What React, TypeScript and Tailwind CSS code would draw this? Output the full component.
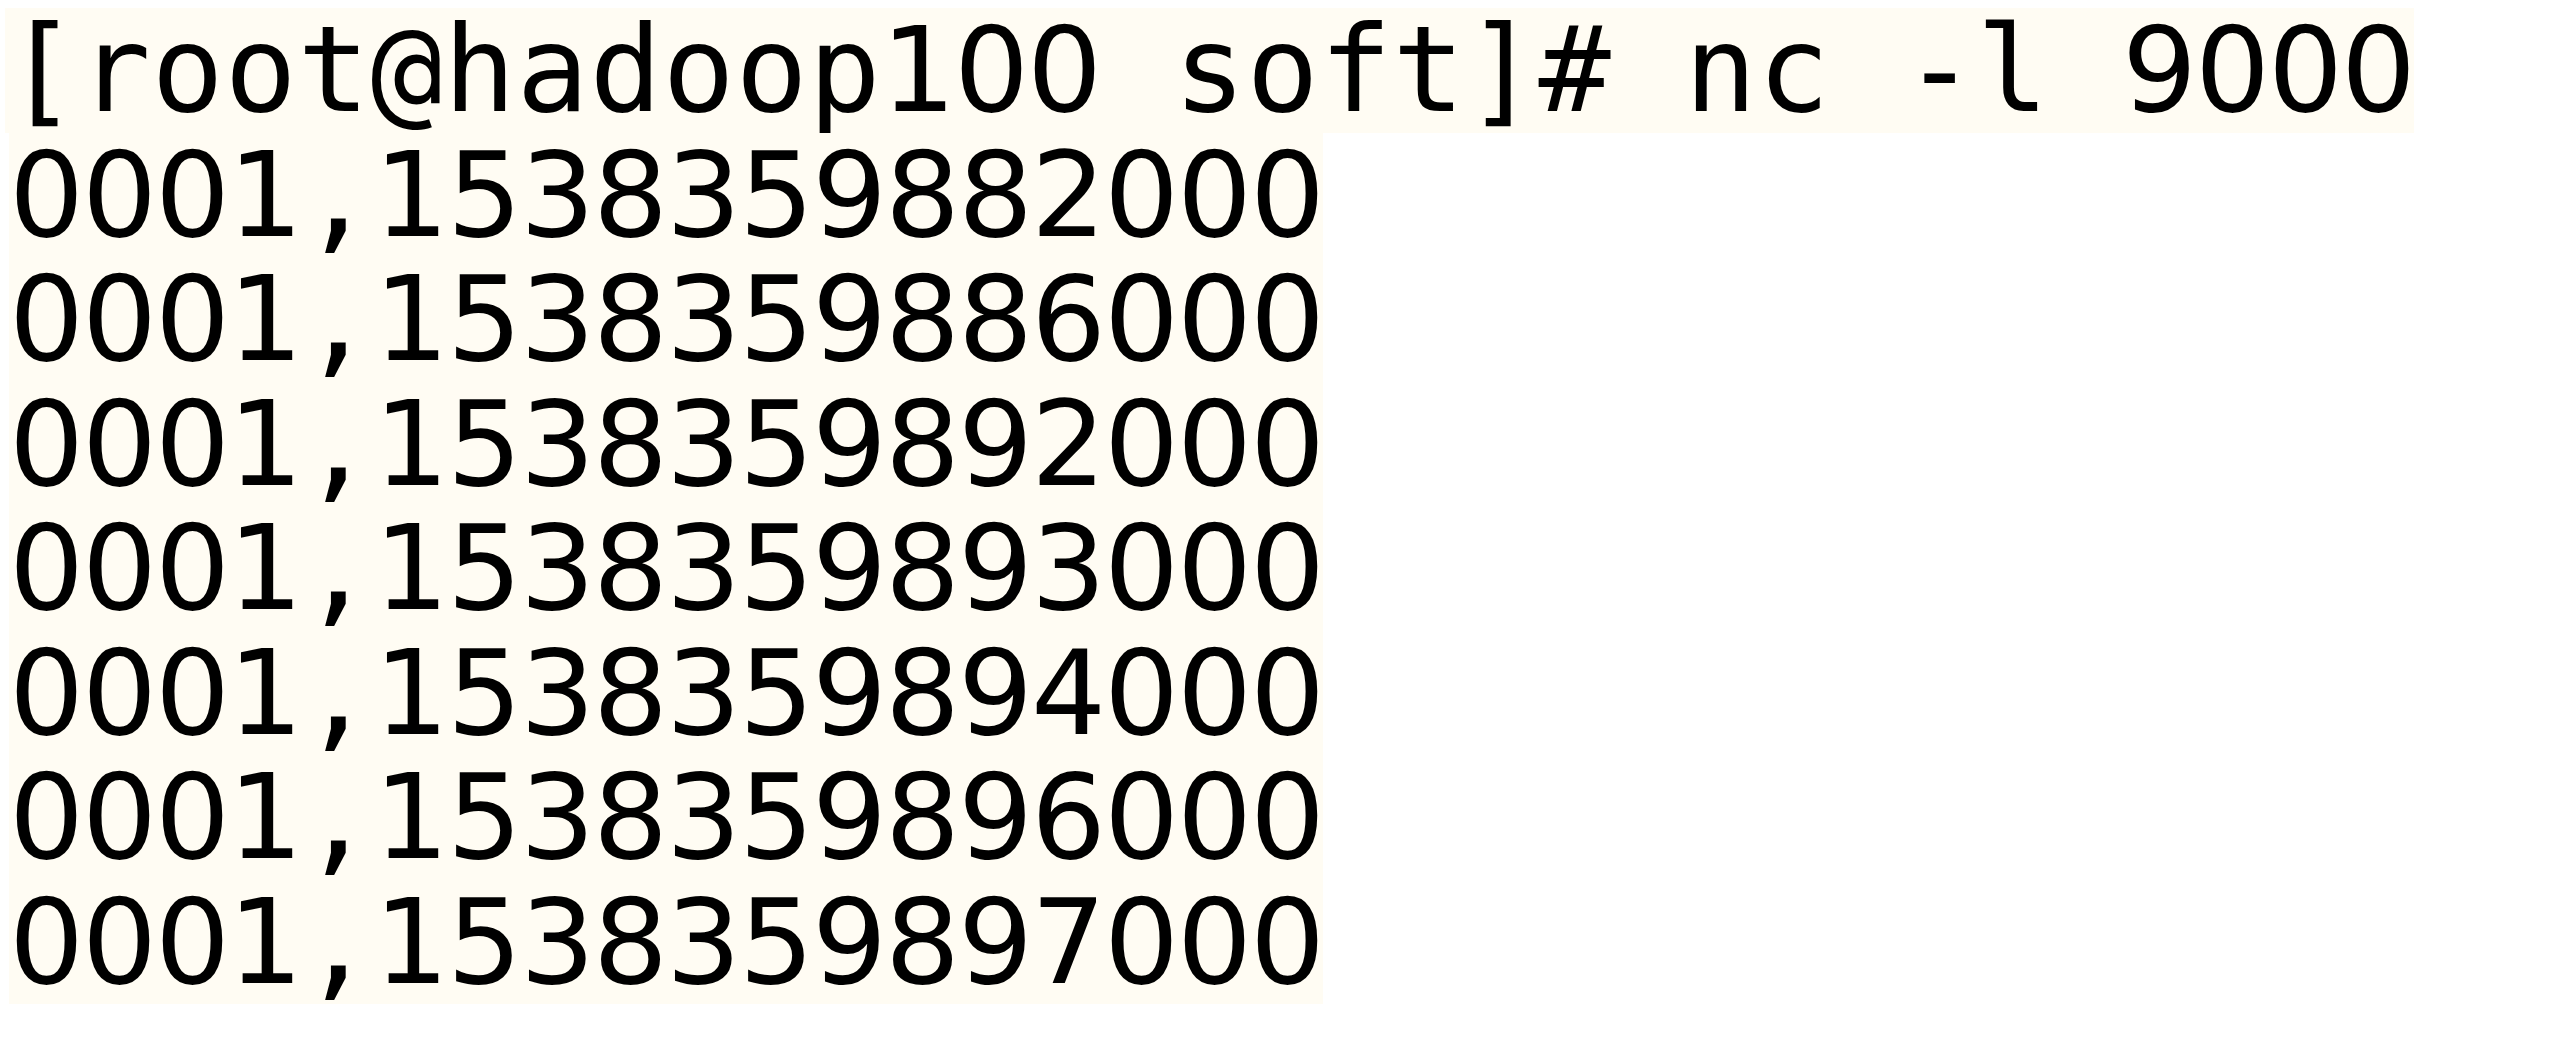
const lines = [
  '[root@hadoop100 soft]# nc -l 9000',
  '0001,1538359882000',
  '0001,1538359886000',
  '0001,1538359892000',
  '0001,1538359893000',
  '0001,1538359894000',
  '0001,1538359896000',
  '0001,1538359897000',
];

// terminal grid: every character sits in a fixed 73px cell
const Cell = ({ ch }: { ch: string }) => {
  const digit = /[0-9]/.test(ch);
  return (
    <span
      className={
        digit
          ? "inline-block w-[73px] shrink-0 text-center font-['DejaVu_Sans',sans-serif] text-[118px]"
          : "inline-block w-[73px] shrink-0 text-center font-['DejaVu_Sans_Mono',monospace] text-[120px]"
      }
    >
      {ch}
    </span>
  );
};

export default function App() {
  return (
    <div className="w-[2560px] h-[1045px] overflow-hidden bg-white pt-[8px] pl-[9px]">
      <div className="flex flex-col items-start text-black whitespace-pre leading-[124.5px]">
        {lines.map((line, i) => (
          <div
            key={i}
            className={
              i === 0
                ? 'flex items-baseline h-[124.5px] -ml-[4px] bg-[#fffcf3]'
                : 'flex items-baseline h-[124.5px] bg-[#fffcf3]'
            }
          >
            {line.split('').map((ch, j) => (
              <Cell key={j} ch={ch} />
            ))}
          </div>
        ))}
      </div>
    </div>
  );
}
